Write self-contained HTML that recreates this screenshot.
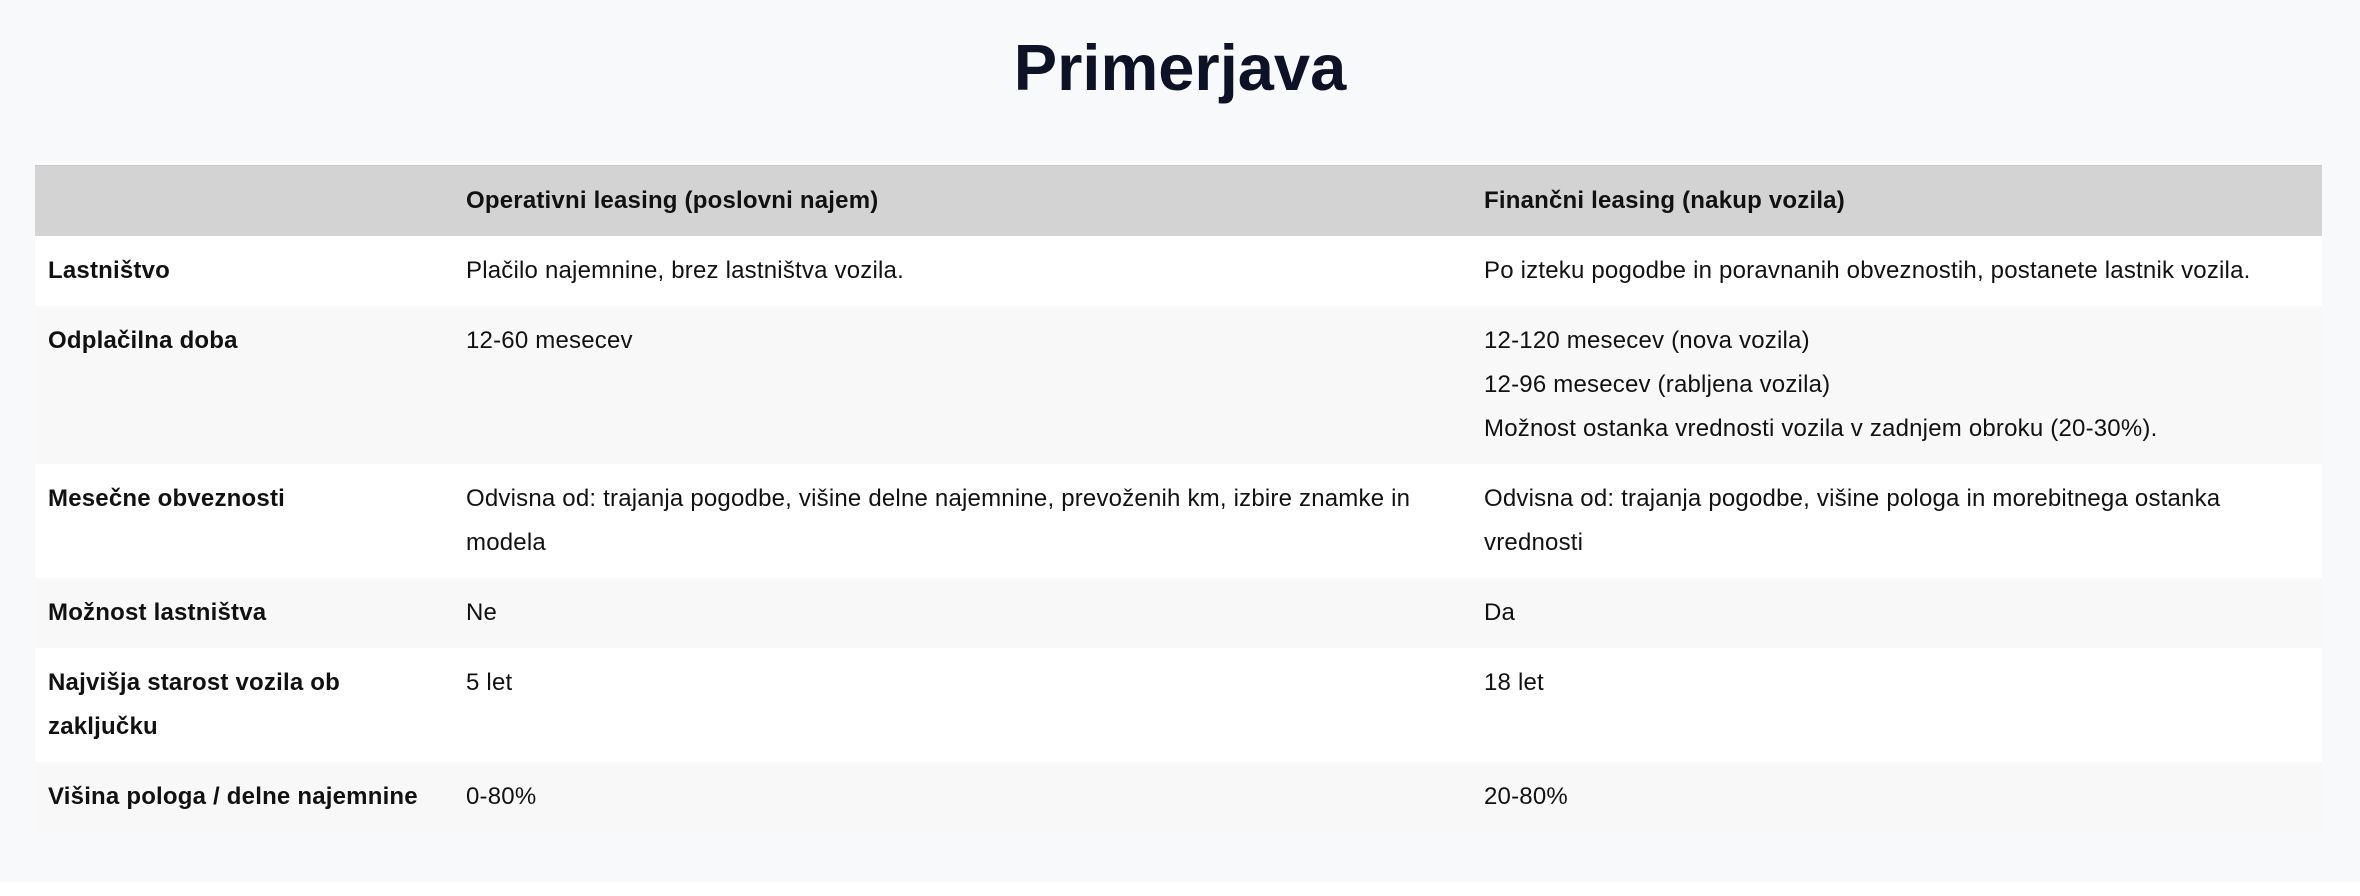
<!DOCTYPE html>
<html><head><meta charset="utf-8"><style>
html,body{margin:0;padding:0;}
body{width:2360px;height:896px;background:#fff;font-family:"Liberation Sans",sans-serif;color:#111;}
.wrap{background:#f8f9fb;height:882px;position:relative;}
h1{margin:0;position:absolute;top:23px;left:0;width:100%;text-align:center;font-size:65px;font-weight:bold;color:#0d1226;line-height:90px;}
table{position:absolute;top:165px;left:35px;width:2287px;border-collapse:collapse;table-layout:fixed;font-size:24px;letter-spacing:0.2px;}
th,td{text-align:left;vertical-align:top;padding:13px 13px;line-height:44px;white-space:nowrap;overflow:visible;}
thead tr{background:#d3d3d3;border-top:1px solid #c8c8c8;}
th{font-weight:bold;height:44px;}
tbody tr:nth-child(odd){background:#fff;}
tbody tr:nth-child(even){background:#f8f8f8;}
td:first-child{font-weight:bold;}
col.c1{width:418px;} col.c2{width:1018px;} col.c3{width:851px;}
</style></head><body><div class="wrap">
<h1>Primerjava</h1>
<table>
<colgroup><col class="c1"><col class="c2"><col class="c3"></colgroup>
<thead><tr><th></th><th>Operativni leasing (poslovni najem)</th><th>Finančni leasing (nakup vozila)</th></tr></thead>
<tbody>
<tr><td>Lastništvo</td><td>Plačilo najemnine, brez lastništva vozila.</td><td>Po izteku pogodbe in poravnanih obveznostih, postanete lastnik vozila.</td></tr>
<tr><td>Odplačilna doba</td><td>12-60 mesecev</td><td>12-120 mesecev (nova vozila)<br>12-96 mesecev (rabljena vozila)<br>Možnost ostanka vrednosti vozila v zadnjem obroku (20-30%).</td></tr>
<tr><td>Mesečne obveznosti</td><td>Odvisna od: trajanja pogodbe, višine delne najemnine, prevoženih km, izbire znamke in<br>modela</td><td>Odvisna od: trajanja pogodbe, višine pologa in morebitnega ostanka<br>vrednosti</td></tr>
<tr><td>Možnost lastništva</td><td>Ne</td><td>Da</td></tr>
<tr><td>Najvišja starost vozila ob<br>zaključku</td><td>5 let</td><td>18 let</td></tr>
<tr><td>Višina pologa / delne najemnine</td><td>0-80%</td><td>20-80%</td></tr>
</tbody></table>
</div></body></html>
